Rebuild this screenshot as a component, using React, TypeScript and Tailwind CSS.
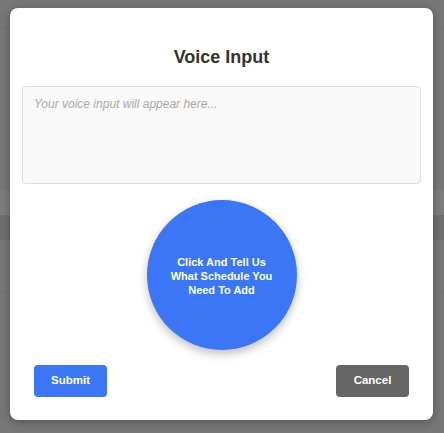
export default function App() {
  return (
    <div className="relative h-[433px] w-[444px] overflow-hidden bg-[#777777] font-['Liberation_Sans',Arial,sans-serif]">
      {/* faint page behind the overlay */}
      <div className="flex h-full flex-col">
        <div className="h-[28px] border-b border-[#727272]" />
        <div className="h-[162px]" />
        <div className="h-[25px] bg-[#7d7d7d]" />
        <div className="h-[25px] bg-[#6f6f6f]" />
        <div className="h-[52px] border-b border-[#727272]" />
        <div className="flex-1" />
      </div>

      <div className="absolute inset-0 flex items-start pl-[10px] pt-[8px]">
        <div className="flex h-[412px] w-[423px] flex-col rounded-[8px] bg-white px-[12px] shadow-[0_2px_10px_rgba(0,0,0,0.3)]">
          <h2 className="mt-[39px] text-center text-[18px] leading-[20px] font-bold text-[#333333]">
            Voice Input
          </h2>
          <textarea
            readOnly
            placeholder="Your voice input will appear here..."
            className="mt-[19px] h-[98px] w-full resize-none rounded-[4px] border border-[#dddddd] bg-[#f9f9f9] px-[11px] py-[10px] text-[12px] italic leading-[14px] text-[#333] outline-none placeholder:text-[#aaaaaa]"
          />
          <div className="mt-[16px] flex justify-center">
            <button className="flex h-[150px] w-[150px] items-center justify-center rounded-full bg-[#3b76f6] px-[20px] pt-[2px] text-center text-[11px] leading-[14px] font-bold text-white shadow-[0_4px_10px_rgba(0,0,0,0.25)]">
              Click And Tell Us What Schedule You Need To Add
            </button>
          </div>
          <div className="mt-[15px] flex justify-between px-[12px]">
            <button className="h-[32px] w-[73px] rounded-[4px] bg-[#3b76f6] text-[11.5px] font-bold text-white">
              Submit
            </button>
            <button className="h-[32px] w-[73px] rounded-[4px] bg-[#666666] text-[11.5px] font-bold text-white">
              Cancel
            </button>
          </div>
        </div>
      </div>
    </div>
  );
}
